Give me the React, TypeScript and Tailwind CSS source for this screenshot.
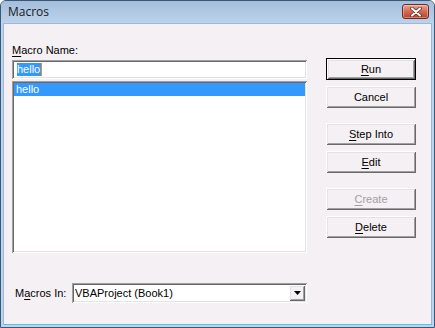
import React from "react"

const raised =
  "shadow-[inset_1px_1px_0_#ffffff,inset_-1px_-1px_0_#696969,inset_2px_2px_0_#e3e3e3,inset_-2px_-2px_0_#a0a0a0]"
const sunken =
  "shadow-[inset_1px_1px_0_#a0a0a0,inset_-1px_-1px_0_#ffffff,inset_2px_2px_0_#696969,inset_-2px_-2px_0_#e3e3e3]"

function Btn({
  label,
  hot,
  isDefault,
  disabled,
  className = "",
}: {
  label: string
  hot?: number
  isDefault?: boolean
  disabled?: boolean
  className?: string
}) {
  return (
    <div
      className={`h-[22px] w-[90px] ${isDefault ? "border border-black" : ""} ${className}`}
    >
      <div
        className={`flex h-full w-full items-center justify-center bg-[#f4f0f4] ${raised} ${
          disabled ? "text-[#a0a0a0]" : "text-black"
        }`}
      >
        {hot === undefined ? (
          <span>{label}</span>
        ) : (
          <span>
            {label.slice(0, hot)}
            <span className="underline underline-offset-2">{label.slice(hot, hot + 1)}</span>
            {label.slice(hot + 1)}
          </span>
        )}
      </div>
    </div>
  )
}

export default function App() {
  return (
    <div className="flex h-[328px] w-[435px] flex-col overflow-hidden rounded-t-[6px] border border-[#3d5877] bg-[#bcd4ee] font-['Liberation_Sans',Arial,sans-serif] text-[11px] leading-[13px] text-black">
      {/* Title bar */}
      <div className="flex h-[21px] shrink-0 items-center justify-between bg-gradient-to-b from-[#a4bedb] to-[#bad1ea] pl-[7px] pr-[5px]">
        <span className="font-['Open_Sans',sans-serif] text-[12px] leading-[14px] text-[#1a1a1a]">Macros</span>
        <div className="flex h-[15px] w-[27px] items-center justify-center rounded-[3px] border border-[#6e2a20] bg-gradient-to-b from-[#e7a596] via-[#d26a55] to-[#c13f26] shadow-[inset_0_0_0_1px_rgba(255,255,255,0.35)]">
          <svg width="14" height="10" viewBox="0 0 14 10">
            <path d="M3 1.5 L11 8.5 M11 1.5 L3 8.5" stroke="#5a1d14" strokeWidth="3.6" strokeLinecap="round" />
            <path d="M3 1.5 L11 8.5 M11 1.5 L3 8.5" stroke="#ffffff" strokeWidth="2.2" strokeLinecap="round" />
          </svg>
        </div>
      </div>

      {/* Frame + client area */}
      <div className="flex flex-1 flex-col px-[2px] pb-[2px] pt-[1px]">
        <div className="flex flex-1 border border-[#9fb7d2] border-b-[#4fc4e6] bg-[#f4f0f4] pl-[8px] pt-[20px]">
          {/* Left column */}
          <div className="flex w-[295px] flex-col">
            <div className="h-[13px]">
              <span className="underline underline-offset-2">M</span>acro Name:
            </div>
            <div className={`mt-[3px] flex h-[19px] items-center bg-white pl-[5px] ${sunken}`}>
              <span className="relative bg-[#3399ff] pr-[1px] text-white">
                hello
                <span className="absolute right-[-1px] top-0 h-[13px] w-[1px] bg-[#ff8a00]" />
              </span>
            </div>
            <div className={`mt-[2px] flex h-[172px] flex-col bg-white p-[2px] ${sunken}`}>
              <div className="h-[13px] bg-[#3399ff] pl-[2px] text-white">hello</div>
            </div>
            <div className="mt-[30px] flex items-center">
              <span className="ml-[3px] w-[57px]">
                M<span className="underline underline-offset-2">a</span>cros In:
              </span>
              <div className={`flex h-[20px] w-[235px] items-center bg-white pl-[3px] pr-[2px] ${sunken}`}>
                <span className="flex-1">VBAProject (Book1)</span>
                <div className={`flex h-[16px] w-[16px] items-center justify-center bg-[#f4f0f4] ${raised}`}>
                  <svg width="7" height="4" viewBox="0 0 7 4">
                    <path d="M0 0 H7 L3.5 4 Z" fill="#000" />
                  </svg>
                </div>
              </div>
            </div>
          </div>

          {/* Right column */}
          <div className="ml-[19px] mt-[14px] flex flex-col">
            <Btn label="Run" hot={0} isDefault />
            <Btn label="Cancel" className="mt-[6px]" />
            <Btn label="Step Into" hot={0} className="mt-[15px]" />
            <Btn label="Edit" hot={0} className="mt-[6px]" />
            <Btn label="Create" hot={0} disabled className="mt-[15px]" />
            <Btn label="Delete" hot={0} className="mt-[6px]" />
          </div>
        </div>
      </div>
    </div>
  )
}
